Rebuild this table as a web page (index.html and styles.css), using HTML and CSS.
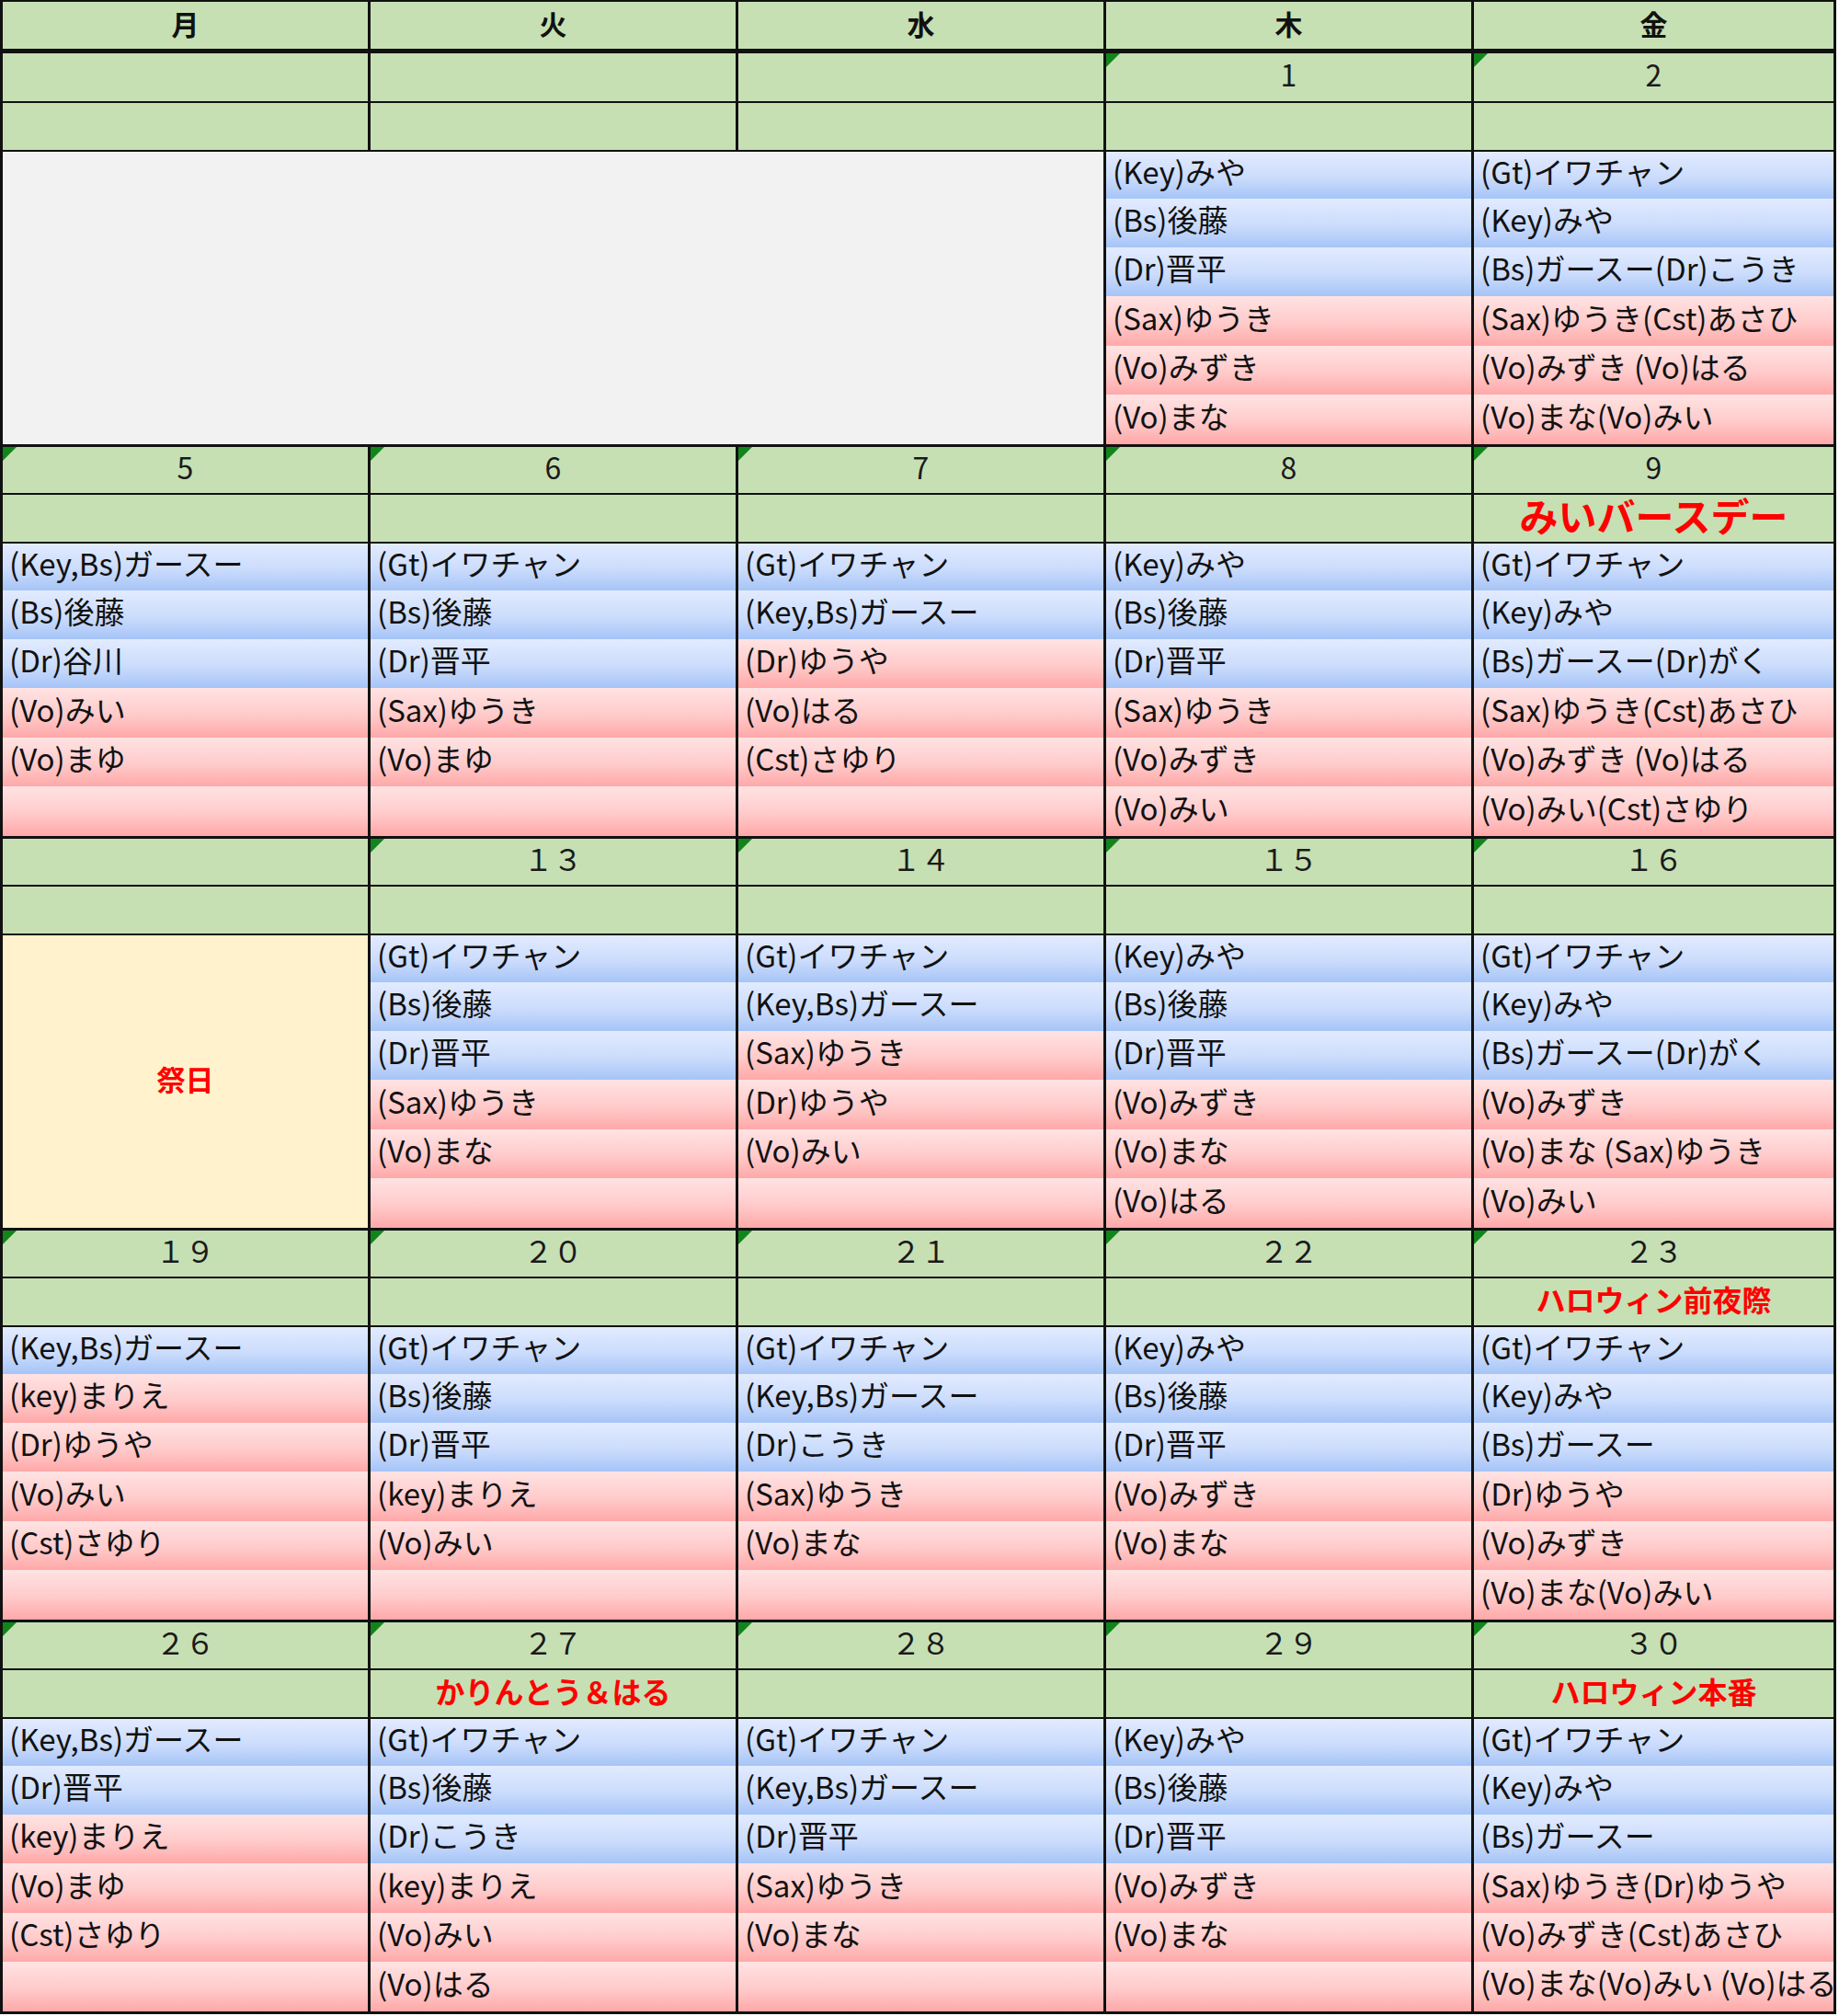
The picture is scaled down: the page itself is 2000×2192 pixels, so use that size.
FILE: index.html
```html
<!DOCTYPE html>
<html lang="ja">
<head>
<meta charset="utf-8">
<title>カレンダー</title>
<link rel="stylesheet" href="styles.css">
</head>
<body>
<div class="cal">
  <div class="hd">月</div><div class="hd">火</div><div class="hd">水</div><div class="hd">木</div><div class="hd">金</div>

  <!-- week 1 -->
  <div class="date w1"></div><div class="date w1"></div><div class="date w1"></div><div class="date w1 mk">1</div><div class="date w1 mk">2</div>
  <div class="ev"></div><div class="ev"></div><div class="ev"></div><div class="ev"></div><div class="ev"></div>
  <div class="blank"></div><div class="m b top">(Key)みや</div><div class="m b top">(Gt)イワチャン</div>
  <div class="m b">(Bs)後藤</div><div class="m b">(Key)みや</div>
  <div class="m b">(Dr)晋平</div><div class="m b">(Bs)ガースー(Dr)こうき</div>
  <div class="m p">(Sax)ゆうき</div><div class="m p">(Sax)ゆうき(Cst)あさひ</div>
  <div class="m p">(Vo)みずき</div><div class="m p">(Vo)みずき (Vo)はる</div>
  <div class="m p">(Vo)まな</div><div class="m p">(Vo)まな(Vo)みい</div>

  <!-- week 2 -->
  <div class="date mk">5</div><div class="date mk">6</div><div class="date mk">7</div><div class="date mk">8</div><div class="date mk">9</div>
  <div class="ev"></div><div class="ev"></div><div class="ev"></div><div class="ev"></div><div class="ev"><span class="red big">みいバースデー</span></div>
  <div class="m b top">(Key,Bs)ガースー</div><div class="m b top">(Gt)イワチャン</div><div class="m b top">(Gt)イワチャン</div><div class="m b top">(Key)みや</div><div class="m b top">(Gt)イワチャン</div>
  <div class="m b">(Bs)後藤</div><div class="m b">(Bs)後藤</div><div class="m b">(Key,Bs)ガースー</div><div class="m b">(Bs)後藤</div><div class="m b">(Key)みや</div>
  <div class="m b">(Dr)谷川</div><div class="m b">(Dr)晋平</div><div class="m p">(Dr)ゆうや</div><div class="m b">(Dr)晋平</div><div class="m b">(Bs)ガースー(Dr)がく</div>
  <div class="m p">(Vo)みい</div><div class="m p">(Sax)ゆうき</div><div class="m p">(Vo)はる</div><div class="m p">(Sax)ゆうき</div><div class="m p">(Sax)ゆうき(Cst)あさひ</div>
  <div class="m p">(Vo)まゆ</div><div class="m p">(Vo)まゆ</div><div class="m p">(Cst)さゆり</div><div class="m p">(Vo)みずき</div><div class="m p">(Vo)みずき (Vo)はる</div>
  <div class="m p"></div><div class="m p"></div><div class="m p"></div><div class="m p">(Vo)みい</div><div class="m p">(Vo)みい(Cst)さゆり</div>

  <!-- week 3 -->
  <div class="date"></div><div class="date mk">１３</div><div class="date mk">１４</div><div class="date mk">１５</div><div class="date mk">１６</div>
  <div class="ev"></div><div class="ev"></div><div class="ev"></div><div class="ev"></div><div class="ev"></div>
  <div class="holiday"><span class="red">祭日</span></div><div class="m b top">(Gt)イワチャン</div><div class="m b top">(Gt)イワチャン</div><div class="m b top">(Key)みや</div><div class="m b top">(Gt)イワチャン</div>
  <div class="m b">(Bs)後藤</div><div class="m b">(Key,Bs)ガースー</div><div class="m b">(Bs)後藤</div><div class="m b">(Key)みや</div>
  <div class="m b">(Dr)晋平</div><div class="m p">(Sax)ゆうき</div><div class="m b">(Dr)晋平</div><div class="m b">(Bs)ガースー(Dr)がく</div>
  <div class="m p">(Sax)ゆうき</div><div class="m p">(Dr)ゆうや</div><div class="m p">(Vo)みずき</div><div class="m p">(Vo)みずき</div>
  <div class="m p">(Vo)まな</div><div class="m p">(Vo)みい</div><div class="m p">(Vo)まな</div><div class="m p">(Vo)まな (Sax)ゆうき</div>
  <div class="m p"></div><div class="m p"></div><div class="m p">(Vo)はる</div><div class="m p">(Vo)みい</div>

  <!-- week 4 -->
  <div class="date mk">１９</div><div class="date mk">２０</div><div class="date mk">２１</div><div class="date mk">２２</div><div class="date mk">２３</div>
  <div class="ev"></div><div class="ev"></div><div class="ev"></div><div class="ev"></div><div class="ev"><span class="red">ハロウィン前夜際</span></div>
  <div class="m b top">(Key,Bs)ガースー</div><div class="m b top">(Gt)イワチャン</div><div class="m b top">(Gt)イワチャン</div><div class="m b top">(Key)みや</div><div class="m b top">(Gt)イワチャン</div>
  <div class="m p">(key)まりえ</div><div class="m b">(Bs)後藤</div><div class="m b">(Key,Bs)ガースー</div><div class="m b">(Bs)後藤</div><div class="m b">(Key)みや</div>
  <div class="m p">(Dr)ゆうや</div><div class="m b">(Dr)晋平</div><div class="m b">(Dr)こうき</div><div class="m b">(Dr)晋平</div><div class="m b">(Bs)ガースー</div>
  <div class="m p">(Vo)みい</div><div class="m p">(key)まりえ</div><div class="m p">(Sax)ゆうき</div><div class="m p">(Vo)みずき</div><div class="m p">(Dr)ゆうや</div>
  <div class="m p">(Cst)さゆり</div><div class="m p">(Vo)みい</div><div class="m p">(Vo)まな</div><div class="m p">(Vo)まな</div><div class="m p">(Vo)みずき</div>
  <div class="m p"></div><div class="m p"></div><div class="m p"></div><div class="m p"></div><div class="m p">(Vo)まな(Vo)みい</div>

  <!-- week 5 -->
  <div class="date mk">２６</div><div class="date mk">２７</div><div class="date mk">２８</div><div class="date mk">２９</div><div class="date mk">３０</div>
  <div class="ev"></div><div class="ev"><span class="red">かりんとう＆はる</span></div><div class="ev"></div><div class="ev"></div><div class="ev"><span class="red">ハロウィン本番</span></div>
  <div class="m b top">(Key,Bs)ガースー</div><div class="m b top">(Gt)イワチャン</div><div class="m b top">(Gt)イワチャン</div><div class="m b top">(Key)みや</div><div class="m b top">(Gt)イワチャン</div>
  <div class="m b">(Dr)晋平</div><div class="m b">(Bs)後藤</div><div class="m b">(Key,Bs)ガースー</div><div class="m b">(Bs)後藤</div><div class="m b">(Key)みや</div>
  <div class="m p">(key)まりえ</div><div class="m b">(Dr)こうき</div><div class="m b">(Dr)晋平</div><div class="m b">(Dr)晋平</div><div class="m b">(Bs)ガースー</div>
  <div class="m p">(Vo)まゆ</div><div class="m p">(key)まりえ</div><div class="m p">(Sax)ゆうき</div><div class="m p">(Vo)みずき</div><div class="m p">(Sax)ゆうき(Dr)ゆうや</div>
  <div class="m p">(Cst)さゆり</div><div class="m p">(Vo)みい</div><div class="m p">(Vo)まな</div><div class="m p">(Vo)まな</div><div class="m p">(Vo)みずき(Cst)あさひ</div>
  <div class="m p"></div><div class="m p">(Vo)はる</div><div class="m p"></div><div class="m p"></div><div class="m p clip">(Vo)まな(Vo)みい (Vo)はる</div>
</div>
</body>
</html>
```

FILE: styles.css
```css
html, body {
  margin: 0;
  padding: 0;
  background: #ffffff;
}

body {
  font-family: "Noto Sans CJK JP", "Noto Sans", sans-serif;
  color: #111;
}

.cal {
  display: grid;
  width: 1997px;
  box-sizing: border-box;
  grid-template-columns: 400px 400px 400px 400px 394px;
  grid-template-rows:
    51px
    57px 53px 53px 53px 53px 54px 53px 54px
    53px 53px 53px 53px 53px 54px 53px 54px
    53px 53px 53px 53px 53px 54px 53px 54px
    53px 53px 53px 53px 53px 54px 53px 54px
    53px 53px 53px 53px 53px 54px 53px 54px;
  border-top: 2px solid #111;
  border-right: 3px solid #111;
  border-bottom: 3px solid #111;
}

.cal > div {
  box-sizing: border-box;
  border-left: 3px solid #111;
  min-width: 0;
}

.hd {
  background: #c6e0b4;
  font-weight: bold;
  font-size: 30px;
  display: flex;
  align-items: center;
  justify-content: center;
  line-height: 1;
  padding-bottom: 5px;
}

.date {
  position: relative;
  background: #c6e0b4;
  border-top: 3px solid #111;
  font-size: 32px;
  display: flex;
  align-items: center;
  justify-content: center;
  line-height: 1;
  padding-bottom: 8px;
  color: #1a1a1a;
}

.date.w1 {
  border-top-width: 5px;
}

.mk::before {
  content: "";
  position: absolute;
  left: 0;
  top: 0;
  width: 0;
  height: 0;
  border-style: solid;
  border-width: 15px 15px 0 0;
  border-color: #11851a transparent transparent transparent;
}

.ev {
  background: #c6e0b4;
  border-top: 2px solid #111;
  display: flex;
  align-items: center;
  justify-content: center;
  line-height: 1;
  padding-bottom: 8px;
}

.red {
  color: #ff0000;
  font-weight: bold;
  font-size: 32px;
  white-space: nowrap;
}

.red.big {
  font-size: 42px;
}

.m {
  display: flex;
  align-items: center;
  padding-left: 7px;
  padding-bottom: 8px;
  font-size: 33px;
  line-height: 1;
  white-space: nowrap;
  color: #111;
}

.m.clip {
  overflow: hidden;
  padding-bottom: 0;
  padding-top: 0;
  align-items: flex-start;
  line-height: 45px;
}

.m.top {
  border-top: 2px solid #111;
}

.b {
  background: linear-gradient(to bottom, #e2ebff 0%, #cbdcfc 55%, #a6c4f7 100%);
}

.p {
  background: linear-gradient(to bottom, #ffe3e3 0%, #ffcaca 55%, #ffa8a8 100%);
}

.blank {
  grid-column: span 3;
  grid-row: span 6;
  background: #f2f2f2;
  border-top: 2px solid #111;
}

.holiday {
  grid-row: span 6;
  background: #fff2cc;
  border-top: 2px solid #111;
  display: flex;
  align-items: center;
  justify-content: center;
  padding-bottom: 8px;
}

.holiday .red {
  font-size: 31px;
}
```
